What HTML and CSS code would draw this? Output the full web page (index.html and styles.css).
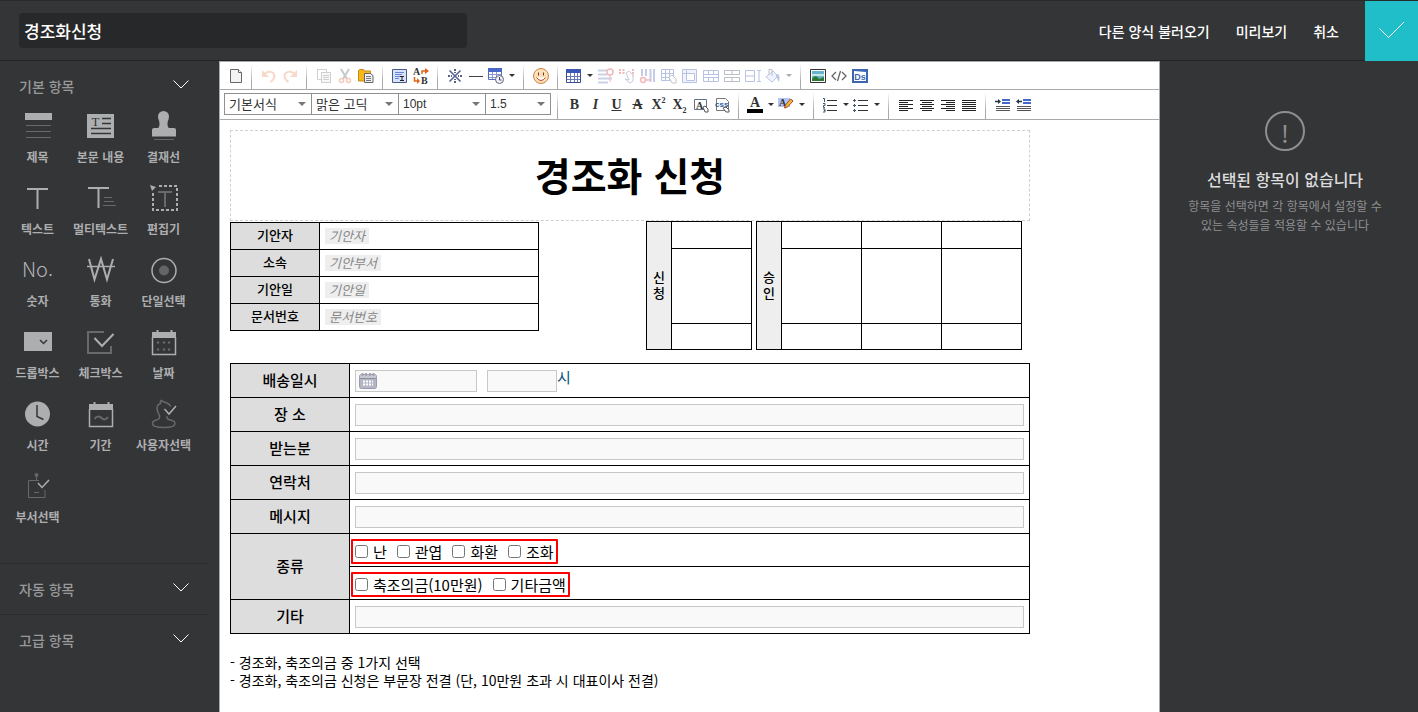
FILE: index.html
```html
<!DOCTYPE html>
<html lang="ko">
<head>
<meta charset="utf-8">
<title>경조화신청</title>
<link rel="stylesheet" href="styles.css">
</head>
<body>
<header class="topbar">
  <input class="form-name" type="text" value="경조화신청" aria-label="양식 이름">
  <nav class="top-actions">
    <a href="#load">다른 양식 불러오기</a>
    <a href="#preview">미리보기</a>
    <a href="#cancel">취소</a>
  </nav>
  <button class="confirm" type="button" aria-label="확인"><svg width="26" height="18" viewBox="0 0 26 18"><path d="M.5 7.5 9.500 16.500 25 1"/></svg></button>
</header>

<div class="workspace">
  <aside class="palette">
    <section class="group">
      <h2><button type="button">기본 항목<svg class="chev" width="16" height="9" viewBox="0 0 16 9"><path d="M.5.500 8 8 15.500.5"/></svg></button></h2>
      <ul class="items">
        <li><button type="button"><svg viewBox="0 0 31 30"><path class="f" d="M3 2h27v7H3z"/><path class="d" d="M4 14.500h25M4 20.500h25M4 26.500h25"/></svg>제목</button></li>
        <li><button type="button"><svg viewBox="0 0 31 30"><path class="f" d="M2 3h27v24H2z"/><text x="10.500" y="15" class="serif-t">T</text><path class="k" d="M17 7.500h9M17 12.500h9M6 17.500h20M6 22.500h20"/></svg>본문 내용</button></li>
        <li><button type="button"><svg viewBox="0 0 31 30"><path class="f" d="M15.500 0a5.500 5.500 0 0 1 5.500 5.500c0 3-1.500 4-1.500 7 0 2.500.5 4.500 2 4.500H26a2 2 0 0 1 2 2v6.500H4V19a2 2 0 0 1 2-2h3.500c1.500 0 2-2 2-4.500 0-3-1.500-4-1.500-7A5.500 5.500 0 0 1 15.500 0z"/><path class="d" d="M6 28.500h20"/></svg>결재선</button></li>
        <li><button type="button"><svg viewBox="0 0 31 30"><path class="l2" d="M5 6h21M15.500 6v20"/></svg>텍스트</button></li>
        <li><button type="button"><svg viewBox="0 0 31 30"><path class="l2" d="M3 5h21M13.500 5v20"/><path class="d" d="M19 14.500h8M19 18.500h10M18 22.500h13"/></svg>멀티텍스트</button></li>
        <li><button type="button"><svg viewBox="0 0 31 30"><path class="l2 dash" d="M11 3h18v24H5V8"/><path class="f" d="M2 2l6 2-4 4z"/><path class="d2" d="M10 9h14M17 9v15"/></svg>편집기</button></li>
        <li><button type="button"><svg viewBox="0 0 31 30"><text x="15.500" y="22" class="no-t">No.</text></svg>숫자</button></li>
        <li><button type="button"><svg viewBox="0 0 31 30"><path class="l2" d="M4 4l5.500 20.500L16 4l6 20.500L28 4"/><path class="l" d="M2 11.500h28"/></svg>통화</button></li>
        <li><button type="button"><svg viewBox="0 0 31 30"><circle class="l" cx="16" cy="15.500" r="12"/><circle class="g" cx="16" cy="15.500" r="5"/></svg>단일선택</button></li>
        <li><button type="button"><svg viewBox="0 0 31 30"><path class="f" d="M2 5h28v19H2z"/><path class="k" d="M18 13l3.500 3.500L25 13"/></svg>드롭박스</button></li>
        <li><button type="button"><svg viewBox="0 0 31 30"><path class="d2" d="M19 5H3v21h23v-7"/><path class="l2" d="M9.500 11l7.500 8L28.500 7"/></svg>체크박스</button></li>
        <li><button type="button"><svg viewBox="0 0 31 30"><path class="f" d="M4 5h24v6H4zM8.500 3h2v3h-2zM22.500 3h2v3h-2z"/><path class="l" d="M4.500 10v17.500h23V10"/><path class="d2" d="M9 16l2-1M15 16l2-1M20 16l2-1M9 23l2-1M15 23l2-1M20 23l2-1"/></svg>날짜</button></li>
        <li><button type="button"><svg viewBox="0 0 31 30"><circle class="f" cx="15.500" cy="15" r="12.500"/><path class="k" d="M15 6v11.500l6.500 3"/></svg>시간</button></li>
        <li><button type="button"><svg viewBox="0 0 31 30"><path class="f" d="M4 5h24v6H4zM8.500 3h2v3h-2zM22.500 3h2v3h-2z"/><path class="l" d="M4.500 10v17.500h23V10"/><path class="d2" d="M9.500 20c2-3 5-3 7-1s4.500 2 6.500-1"/></svg>기간</button></li>
        <li><button type="button"><svg viewBox="0 0 31 30"><path class="d3" d="M22.500 7.500C22 4 17 4 13 1.500c-1 1-1 2-.5 3C9 5.500 8.500 9 9.500 12c.5 2 1.500 3 2 4.500.5 2.500-.5 4-3 4.500-3 .7-4 2-4 3.500 0 3 5 4 11.500 4s11-1 11-4c0-1.500-2-3-4.500-3.500-3-.5-4-1.500-3.500-4"/><path class="l" d="M16.500 10l4.500 5 7-8"/></svg>사용자선택</button></li>
        <li><button type="button"><svg viewBox="0 0 31 30"><circle class="g" cx="14.500" cy="4" r="2"/><path class="d" d="M14.500 4v5.500M17 9.500H6.500v17h16.500V19M12 21.500h5"/><path class="l" d="M16 12l4 4.500L27 9"/></svg>부서선택</button></li>
      </ul>
    </section>
    <section class="group"><h2><button type="button">자동 항목<svg class="chev" width="16" height="9" viewBox="0 0 16 9"><path d="M.5.500 8 8 15.500.5"/></svg></button></h2></section>
    <section class="group"><h2><button type="button">고급 항목<svg class="chev" width="16" height="9" viewBox="0 0 16 9"><path d="M.5.500 8 8 15.500.5"/></svg></button></h2></section>
  </aside>

  <main class="editor">
    <div class="toolbar">
      <div class="tools first">
        <button type="button" aria-label="새 문서"><svg viewBox="0 0 16 16"><path d="M2.500 1.500h8l3 3v10h-11z" fill="#f3f3f3" stroke="#666"/><path d="M10.500 1.500v3h3" fill="#fff" stroke="#666"/></svg></button>
      </div>
      <div class="tools">
        <button type="button" class="faded" aria-label="실행 취소"><svg viewBox="0 0 16 16"><path d="M3 6.500C7 1.500 13.500 4 13.500 8c0 3-2 4.500-4 6" fill="none" stroke="#f0a078" stroke-width="2"/><path d="M1 2v7h7z" fill="#f0a078"/></svg></button>
        <button type="button" class="faded" aria-label="다시 실행"><svg viewBox="0 0 16 16"><path d="M13 6.500C9 1.500 2.500 4 2.500 8c0 3 2 4.500 4 6" fill="none" stroke="#f0a078" stroke-width="2"/><path d="M15 2v7H8z" fill="#f0a078"/></svg></button>
      </div>
      <div class="tools">
        <button type="button" class="faded" aria-label="복사"><svg viewBox="0 0 16 16"><path d="M1.500 1.500h9v10h-9z" fill="#fff" stroke="#888"/><path d="M5.500 4.500h9v10h-9z" fill="#eee" stroke="#888"/><path d="M7 7.500h6M7 9.500h6M7 11.500h6" stroke="#888"/></svg></button>
        <button type="button" class="faded" aria-label="잘라내기"><svg viewBox="0 0 16 16"><path d="M4 1l6 10M12 1L6 11" stroke="#777" stroke-width="2"/><circle cx="4.500" cy="12.500" r="2" fill="none" stroke="#e88050" stroke-width="1.500"/><circle cx="11.500" cy="12.500" r="2" fill="none" stroke="#e88050" stroke-width="1.500"/></svg></button>
        <button type="button" aria-label="붙여넣기"><svg viewBox="0 0 16 16"><path d="M.5 2.500l1-1h4l1 1.500h6v10H.5z" fill="#f4b81c" stroke="#c98a10"/><path d="M6.500 5.500h6l2.500 2v7H6.500z" fill="#eef0f4" stroke="#666"/><path d="M8 8.500h5M8 10.500h5M8 12.500h5" stroke="#777"/></svg></button>
      </div>
      <div class="tools">
        <button type="button" aria-label="전체 선택"><svg viewBox="0 0 16 16"><path d="M.5 1.500h14v13H.5z" fill="#d8e2fa" stroke="#4a5a88"/><path d="M3 4.500h9M3 6.500h7M3 8.500h5M3 10.500h4" stroke="#6a84d8"/><path d="M8 8.500h4M10 8.500v4M8 12.500h4" stroke="#222"/></svg></button>
        <button type="button" aria-label="찾아 바꾸기"><svg viewBox="0 0 16 16"><text x="0" y="7" class="ab">A</text><text x="8" y="16" class="ab">B</text><path d="M9 6V3h4M1.500 9v4h3" fill="none" stroke="#e06418" stroke-width="1.500"/><path d="M12 0l4 3-4 3zM4 10l3 3-3 3z" fill="#e06418"/></svg></button>
      </div>
      <div class="tools">
        <button type="button" aria-label="특수 문자"><svg viewBox="0 0 16 16"><path d="M2.500 2.500l11 11M13.500 2.500l-11 11" stroke="#54608a" stroke-width="1.500"/><path d="M8 1v2M8 13v2M1 8h2M13 8h2M8 4v1M8 11v1M4 8h1M11 8h1" stroke="#54608a" stroke-width="2"/></svg></button>
        <button type="button" aria-label="가로줄"><svg viewBox="0 0 16 16"><path d="M1 8.500h14" stroke="#444"/></svg></button>
        <button type="button" class="menu" aria-label="날짜와 시간"><svg viewBox="0 0 16 16"><path d="M.5.500h13v11H.5z" fill="#fff" stroke="#5a6cb8"/><path d="M0 0h14v4H0z" fill="#4a68c8"/><path d="M1 6.500h12M1 9.500h12M4.500 4v7M8.500 4v7" stroke="#8898d0"/><circle cx="11.500" cy="11.500" r="4" fill="#eef2fc" stroke="#667"/><path d="M11.500 9v3h2" fill="none" stroke="#445"/></svg></button>
      </div>
      <div class="tools">
        <button type="button" aria-label="이모티콘"><svg viewBox="0 0 16 16"><circle cx="8" cy="8" r="7.500" fill="#fde0b8" stroke="#d08048"/><path d="M5.500 4.500v3M10.500 4.500v3" stroke="#733"/><path d="M3.500 9.500q4.500 6 9 0" fill="#fff" stroke="#c04028"/></svg></button>
      </div>
      <div class="tools">
        <button type="button" class="menu" aria-label="표"><svg viewBox="0 0 16 16"><path d="M.5 1.500h14v13H.5z" fill="#fff" stroke="#3c4a90"/><path d="M0 1h15v4H0z" fill="#3c56b8"/><path d="M1 8.500h13M1 11.500h13M4.500 5v9M8.500 5v9M11.500 5v9" stroke="#6878b8"/></svg></button>
        <button type="button" class="faded" aria-label="행 삽입"><svg viewBox="0 0 16 16"><path d="M0 2.500h9M0 6.500h9M0 10.500h14M0 14.500h10" stroke="#8090c8" stroke-width="2"/><circle cx="12" cy="4" r="3" fill="#fff" stroke="#e05050" stroke-width="1.500"/><path d="M12 7v7" stroke="#e05050"/></svg></button>
        <button type="button" class="faded" aria-label="열 삽입"><svg viewBox="0 0 16 16"><path d="M1 1v5M4.500 1v5M14 1v9" stroke="#e05050" stroke-width="2" stroke-dasharray="2 1"/><path d="M7 5l3-2 4 4v6l-3 2-5-4 4 1z" fill="#fff" stroke="#7080b0"/></svg></button>
        <button type="button" class="faded" aria-label="열 추가"><svg viewBox="0 0 16 16"><path d="M2 1v7M6 1v7M10.500 1v13M14 1v13" stroke="#7080c8" stroke-width="2"/><circle cx="3" cy="12" r="2.500" fill="#fff" stroke="#e05050" stroke-width="1.500"/><path d="M5 12h6" stroke="#e05050" stroke-width="1.500"/></svg></button>
        <button type="button" class="faded" aria-label="표 삭제"><svg viewBox="0 0 16 16"><path d="M.5 1.500h12v11H.5zM1 5.500h12M1 9.500h12M4.500 1v12M8.500 1v12" fill="none" stroke="#5068b8"/><path d="M8 9l3-2 4 4v4h-4z" fill="#fff" stroke="#777"/></svg></button>
        <button type="button" class="faded" aria-label="표 속성"><svg viewBox="0 0 16 16"><path d="M.5 1.500h14v13H.5z" fill="#dde4ff" stroke="#5068b8"/><path d="M4.500 5.500h8v7h-8zM4.500 1v4M1 5.500h4" fill="#fff" stroke="#5068b8"/></svg></button>
        <button type="button" class="faded" aria-label="셀 병합"><svg viewBox="0 0 16 16"><path d="M.5 2.500h15v11H.5z" fill="#fff" stroke="#5068b8"/><path d="M1 6.500h14M1 9.500h14M5.500 2v5M10.500 2v5M5.500 10v4M10.500 10v4" stroke="#5068b8"/></svg></button>
        <button type="button" class="faded" aria-label="행 나누기"><svg viewBox="0 0 16 16"><path d="M.5 6V2.500h15V6M8 2v4M0 6.500h16M.5 13.500v-4h15v4zM8 10v4" fill="none" stroke="#5a6078"/></svg></button>
        <button type="button" class="faded" aria-label="열 나누기"><svg viewBox="0 0 16 16"><path d="M.5 2.500h9v11h-9zM1 8h9M12 2.500h4M14 2.500v11M12 13.500h4" fill="none" stroke="#5068b8"/></svg></button>
        <button type="button" class="menu faded" aria-label="셀 배경색"><svg viewBox="0 0 16 16"><path d="M1 9l7-6 5 5-6 6z" fill="#d8e4ff" stroke="#5878c0"/><path d="M4 7V1.500h3V8" fill="none" stroke="#567"/><path d="M11 6c4 0 4 3 3 8-2-2-1-4-3-5z" fill="#5070c0"/></svg></button>
      </div>
      <div class="tools last">
        <button type="button" aria-label="이미지"><svg viewBox="0 0 16 16"><path d="M.5 1.500h15v13H.5z" fill="#fff" stroke="#333"/><path d="M2 3h12v10H2z" fill="#68b4d0"/><path d="M2 8h12V6H2z" fill="#c8e8e8"/><path d="M2 11c3-4 5-3 7 0l5-2v4H2z" fill="#2c7a34"/></svg></button>
        <button type="button" aria-label="소스"><svg viewBox="0 0 16 16"><path d="M5 4L1 8l4 4M11 4l4 4-4 4M9.500 3l-3 10" fill="none" stroke="#666" stroke-width="1.300"/></svg></button>
        <button type="button" aria-label="Ds"><svg viewBox="0 0 16 16"><path d="M0 1h16v14H0z" fill="#3c66b4"/><path d="M2 3l12 1v9H2z" fill="#fff"/><text x="8" y="11.500" class="ds">Ds</text></svg></button>
      </div>
    </div>

    <div class="toolbar second">
      <div class="tools selects">
        <span class="pick"><select aria-label="서식"><option>기본서식</option></select></span>
        <span class="pick"><select aria-label="글꼴"><option>맑은 고딕</option></select></span>
        <span class="pick"><select class="latin" aria-label="글자 크기"><option>10pt</option></select></span>
        <span class="pick narrow"><select class="latin" aria-label="줄 간격"><option>1.5</option></select></span>
      </div>
      <div class="tools type">
        <button type="button"><b>B</b></button>
        <button type="button"><i>I</i></button>
        <button type="button"><u>U</u></button>
        <button type="button"><s>A</s></button>
        <button type="button"><span>X<sup>2</sup></span></button>
        <button type="button"><span>X<sub>2</sub></span></button>
        <button type="button" aria-label="서식 지우기"><svg viewBox="0 0 16 16"><path d="M1.500 2.500h12v10h-12z" fill="#fff" stroke="#66708c"/><text x="3" y="12" class="ab">A</text><path d="M10 10l2-1 3 3v3h-3z" fill="#fff" stroke="#555"/></svg></button>
        <button type="button" aria-label="CSS 지우기"><svg viewBox="0 0 16 16"><path d="M2.500 1.500h9l3 3v9h-12z" fill="#fff" stroke="#777"/><text x="1" y="10" class="css">css</text><path d="M9 11l3-1 3 3v2h-3z" fill="#fff" stroke="#555"/></svg></button>
      </div>
      <div class="tools type">
        <button type="button" class="menu" aria-label="글자색"><svg viewBox="0 0 16 16"><text x="8" y="9.500" class="ca">A</text><path d="M0 12h16v4H0z" fill="#000"/></svg></button>
        <button type="button" class="menu" aria-label="배경색"><svg viewBox="0 0 16 16"><path d="M0 1h12v9H0z" fill="#b4c4f8"/><text x="1" y="9" class="ab">A</text><path d="M6.500 11l1-3 5-6 2.500 2-5.500 6z" fill="#f4b83c" stroke="#a84818"/></svg></button>
      </div>
      <div class="tools">
        <button type="button" class="menu" aria-label="번호 목록"><svg viewBox="0 0 16 16"><path d="M5 3.500h10M5 8.500h10M5 13.500h10" stroke="#333"/><path d="M1 1.500h1.500V5M1 6.500h2v2H1.500v2H3M1 12h2v3H1M2 13.500h1" fill="none" stroke="#456"/></svg></button>
        <button type="button" class="menu" aria-label="글머리 목록"><svg viewBox="0 0 16 16"><path d="M5 3.500h10M5 8.500h10M5 13.500h10" stroke="#333"/><path d="M0 3.500h3M1.500 2v3M0 8.500h3M1.500 7v3M0 13.500h3M1.500 12v3" stroke="#456"/></svg></button>
      </div>
      <div class="tools">
        <button type="button" aria-label="왼쪽 정렬"><svg viewBox="0 0 16 16"><path d="M1 3.500h14M1 5.500h9M1 7.500h14M1 9.500h9M1 11.500h14M1 13.500h9" stroke="#222"/></svg></button>
        <button type="button" aria-label="가운데 정렬"><svg viewBox="0 0 16 16"><path d="M1 3.500h14M3 5.500h10M1 7.500h14M3 9.500h10M1 11.500h14M3 13.500h10" stroke="#222"/></svg></button>
        <button type="button" aria-label="오른쪽 정렬"><svg viewBox="0 0 16 16"><path d="M1 3.500h14M6 5.500h9M1 7.500h14M6 9.500h9M1 11.500h14M6 13.500h9" stroke="#222"/></svg></button>
        <button type="button" aria-label="양쪽 정렬"><svg viewBox="0 0 16 16"><path d="M1 3.500h14M1 5.500h14M1 7.500h14M1 9.500h14M1 11.500h14M1 13.500h14" stroke="#222"/></svg></button>
      </div>
      <div class="tools last">
        <button type="button" aria-label="들여쓰기"><svg viewBox="0 0 16 16"><path d="M7 3h8M7 6h8" stroke="#4468c8" stroke-width="2"/><path d="M1 9.500h14M1 11.500h14M1 13.500h14" stroke="#555"/><path d="M0 4.500h4" stroke="#234" stroke-width="1.500"/><path d="M3 2l3 2.500L3 7z" fill="#234"/></svg></button>
        <button type="button" aria-label="내어쓰기"><svg viewBox="0 0 16 16"><path d="M7 3h8M7 6h8" stroke="#4468c8" stroke-width="2"/><path d="M1 9.500h14M1 11.500h14M1 13.500h14" stroke="#555"/><path d="M2 4.500h4" stroke="#234" stroke-width="1.500"/><path d="M3 2L0 4.500 3 7z" fill="#234"/></svg></button>
      </div>
    </div>

    <article class="paper">
      <h1>경조화 신청</h1>
      <div class="head-row">
        <table class="info">
          <tr><th>기안자</th><td><em>기안자</em></td></tr>
          <tr><th>소속</th><td><em>기안부서</em></td></tr>
          <tr><th>기안일</th><td><em>기안일</em></td></tr>
          <tr><th>문서번호</th><td><em>문서번호</em></td></tr>
        </table>
        <div class="signs">
          <table class="sign">
            <tr><th rowspan="3">신<br>청</th><td></td></tr>
            <tr class="stamp"><td></td></tr>
            <tr class="date-row"><td></td></tr>
          </table>
          <table class="sign">
            <tr><th rowspan="3">승<br>인</th><td></td><td></td><td></td></tr>
            <tr class="stamp"><td></td><td></td><td></td></tr>
            <tr class="date-row"><td></td><td></td><td></td></tr>
          </table>
        </div>
      </div>

      <table class="form">
        <tr><th><label for="date">배송일시</label></th><td><div class="when">
          <span class="date"><input id="date" type="text"><svg width="18" height="17" viewBox="0 0 18 17"><rect x=".5" y="2.500" width="17" height="14" rx="2" fill="#b4b6c4" stroke="#9a9cac"/><path d="M1 3h16v3H1z" fill="#c6c8d4"/><path d="M3.500 1v3M7 1v3M11 1v3M14.500 1v3" stroke="#a4a6b4" stroke-width="2"/><path d="M1 6.500h16" stroke="#8e90a0"/><path d="M4 9.500h10M4 12.500h10" stroke="#fff" stroke-width="2" stroke-dasharray="2 1"/></svg></span>
          <span class="hour"><input id="hour" type="text"></span><label for="hour">시</label></div></td></tr>
        <tr><th><label for="place">장 소</label></th><td><input id="place" type="text"></td></tr>
        <tr><th><label for="to">받는분</label></th><td><input id="to" type="text"></td></tr>
        <tr><th><label for="tel">연락처</label></th><td><input id="tel" type="text"></td></tr>
        <tr><th><label for="msg">메시지</label></th><td><input id="msg" type="text"></td></tr>
        <tr class="kind"><th rowspan="2">종류</th><td><div class="checks">
          <label><input type="checkbox">난</label><label><input type="checkbox">관엽</label><label><input type="checkbox">화환</label><label><input type="checkbox">조화</label></div></td></tr>
        <tr class="kind"><td><div class="checks">
          <label><input type="checkbox">축조의금(10만원)</label><label><input type="checkbox">기타금액</label></div></td></tr>
        <tr><th><label for="etc">기타</label></th><td><input id="etc" type="text"></td></tr>
      </table>

      <p class="notes">- 경조화, 축조의금 중 1가지 선택<br>- 경조화, 축조의금 신청은 부문장 전결 (단, 10만원 초과 시 대표이사 전결)</p>
    </article>
  </main>

  <aside class="props">
    <div class="mark">!</div>
    <h2>선택된 항목이 없습니다</h2>
    <p>항목을 선택하면 각 항목에서 설정할 수<br>있는 속성들을 적용할 수 있습니다</p>
  </aside>
</div>
</body>
</html>
```

FILE: styles.css
```css
* { box-sizing: border-box; }

body {
  margin: 0;
  height: 100vh;
  display: flex;
  flex-direction: column;
  overflow: hidden;
  background: #343537;
  font-family: "Noto Sans CJK KR", sans-serif;
  font-size: 13px;
}

button, input, select { font: inherit; }
button { border: 0; padding: 0; background: none; color: inherit; cursor: pointer; }

/* header */
.topbar {
  display: flex;
  align-items: center;
  height: 61px;
  flex: none;
  padding-left: 19px;
  border-top: 1px solid #28292b;
  border-bottom: 1px solid #222325;
}
.form-name {
  width: 448px;
  height: 35px;
  padding: 0 5px 1px;
  border: 0;
  border-radius: 4px;
  background: #27282a;
  color: #fff;
  font-size: 17px;
  font-weight: 500;
}
.top-actions { display: flex; gap: 26px; margin-left: auto; padding-right: 26px; }
.top-actions a { color: #fff; font-size: 14px; font-weight: 500; line-height: 20px; text-decoration: none; }
.confirm {
  width: 53px;
  height: 60px;
  padding-bottom: 2px;
  background: #20bec9;
  display: flex;
  align-items: center;
  justify-content: center;
}
.confirm path { fill: none; stroke: #fff; }

.workspace { flex: 1; display: flex; min-height: 0; }

/* field palette */
.palette { width: 219px; flex: none; padding-right: 10px; }
.group + .group { border-top: 1px solid #2b2c2e; }
.group h2 { margin: 0; font-size: 14px; font-weight: 500; color: #98999b; }
.group h2 button {
  display: flex;
  align-items: center;
  justify-content: space-between;
  width: 100%;
  height: 50px;
  padding: 0 20px 0 19px;
}
.chev { fill: none; stroke: #fff; margin-bottom: 4px; }
.items {
  list-style: none;
  margin: 0;
  padding: 0 14px 20px 6px;
  display: grid;
  grid-template-columns: repeat(3, 1fr);
  grid-auto-rows: 72px;
}
.items button {
  display: flex;
  flex-direction: column;
  align-items: center;
  gap: 7px;
  width: 100%;
  color: #adaeb0;
  font-size: 12px;
  font-weight: 700;
  line-height: 18px;
  white-space: nowrap;
}
.items svg { width: 31px; height: 30px; overflow: visible; fill: none; }
.items .f { fill: #adaeb0; }
.items .g { fill: #646567; }
.items .l { stroke: #adaeb0; stroke-width: 1.500; }
.items .l2 { stroke: #adaeb0; stroke-width: 2; }
.items .d { stroke: #68696b; }
.items .d2 { stroke: #68696b; stroke-width: 2; }
.items .d3 { stroke: #68696b; stroke-width: 1.500; }
.items .k { stroke: #343537; stroke-width: 1.500; }
.items .dash { stroke-dasharray: 3 2; }
.serif-t { font: 13px "Liberation Serif", serif; fill: #343537; text-anchor: middle; }
.no-t { font: 300 20px "Noto Sans CJK KR", sans-serif; fill: #b4b5b7; text-anchor: middle; }

/* editor */
.editor {
  flex: 1;
  min-width: 0;
  overflow: hidden;
  background: #fff;
  border: solid #aaa;
  border-width: 1px 1px 0;
}
.toolbar { display: flex; height: 28px; border-bottom: 1px solid #aaa; }
.second { height: 30px; }
.tools {
  display: flex;
  align-items: center;
  padding: 0 6px;
  border-right: 1px solid;
  border-image: linear-gradient(#fff 10%, #aaa 70%) 1;
}
.tools.first { padding: 0 5px; }
.tools.last { border: 0; }
.tools button { width: 21px; height: 24px; display: flex; align-items: center; justify-content: center; color: #333; }
.tools svg { width: 16px; height: 16px; flex: none; overflow: visible; }
.tools .menu { width: 31px; justify-content: space-between; padding: 0 2px; }
.menu::after { content: ""; border: 3px solid transparent; border-top-color: #333; border-bottom: 0; }
.faded { opacity: .4; }
.selects { padding: 0 6px 2px 4px; }
.pick { position: relative; width: 88px; height: 22px; }
.pick + .pick { margin-left: -1px; }
.pick.narrow { width: 66px; }
.pick select {
  appearance: none;
  width: 100%;
  height: 22px;
  padding: 0 4px 1px;
  border: 1px solid #909090;
  border-radius: 0;
  background: #fff;
  color: #333;
}
.pick .latin { font: 12px "Liberation Sans", sans-serif; }
.pick::after {
  content: "";
  position: absolute;
  right: 6px;
  top: 9px;
  border: 4px solid transparent;
  border-top-color: #777;
  border-bottom: 0;
}
.type button { font: bold 14px "Liberation Serif", serif; }
.type sup, .type sub { font-size: 8px; line-height: 0; }
.ab { font: bold 10px "Liberation Serif", serif; fill: #333; }
.ca { font: bold 14px "Liberation Serif", serif; fill: #333; text-anchor: middle; }
.css { font: bold 8px "Liberation Sans", sans-serif; fill: #2c5c9c; }
.ds { font: bold 9px "Liberation Sans", sans-serif; fill: #3c66b4; text-anchor: middle; }

/* document */
.paper { max-width: 820px; padding: 10px; color: #000; }
.paper h1 {
  margin: 0;
  height: 91px;
  border: 1px dashed #d0d0d0;
  font-size: 39px;
  font-weight: 700;
  line-height: 86px;
  text-align: center;
}
.paper table { border-collapse: collapse; table-layout: fixed; }
.paper th, .paper td { border: 1px solid #000; padding: 0; }
.paper th { background: #ddd; font-weight: 500; padding-bottom: 2px; }
.head-row { display: flex; justify-content: space-between; align-items: flex-start; padding-right: 8px; }
.info { width: 309px; margin-top: 1px; }
.info tr { height: 27px; }
.info th { width: 89px; line-height: 20px; }
.info td { padding-left: 5px; line-height: 16px; }
.info em { display: inline-block; height: 16px; padding: 0 4px; background: #eee; color: #888; }
.signs { display: flex; gap: 4px; }
.signs tr { height: 27px; }
.signs .stamp { height: 75px; }
.signs .date-row { height: 26px; }
.paper .signs th { width: 25px; background: #eee; line-height: 16px; }
.signs td { width: 80px; }
.form { width: 100%; margin-top: 13px; font-size: 15px; }
.form tr { height: 34px; }
.form .kind { height: 33px; }
.form th { width: 119px; line-height: 20px; }
.paper .form td { padding: 1px 5px 0; }
.form input[type="text"] {
  display: block;
  width: 100%;
  height: 22px;
  padding: 0 4px;
  border: 1px solid #c8c8c8;
  background: #f9f9f9;
}
.when { display: flex; align-items: flex-start; color: #0b5580; line-height: 18px; }
.when label { margin-top: -2px; }
.date { position: relative; width: 122px; margin-right: 10px; }
.date svg { position: absolute; left: 4px; top: 2px; }
.form .date input { padding-left: 26px; }
.hour { width: 70px; }
.paper .form .kind td { padding: 0 1px; vertical-align: bottom; }
.checks {
  display: flex;
  width: fit-content;
  gap: 10px;
  height: 25px;
  margin-bottom: 2px;
  padding: 0 2px;
  border: 2px solid #f00;
  border-radius: 1px;
}
.checks label { display: flex; align-items: center; gap: 5px; line-height: 20px; }
.checks input { width: 13px; height: 13px; margin: 0; }
.notes { margin: 19px 0 0; font-size: 14px; line-height: 18px; white-space: nowrap; }

/* property panel */
.props { width: 258px; flex: none; padding: 50px 8px 0 0; text-align: center; }
.mark {
  width: 40px;
  height: 40px;
  margin: 0 auto;
  border: 2px solid #8e8f91;
  border-radius: 50%;
  color: #8e8f91;
  font: 26px/40px "Open Sans", sans-serif;
}
.props h2 { margin: 16px 0 5px; color: #ddd; font-size: 16px; font-weight: 500; line-height: 24px; }
.props p { margin: 0; color: #8e8f91; font-size: 12px; line-height: 19px; }
```
